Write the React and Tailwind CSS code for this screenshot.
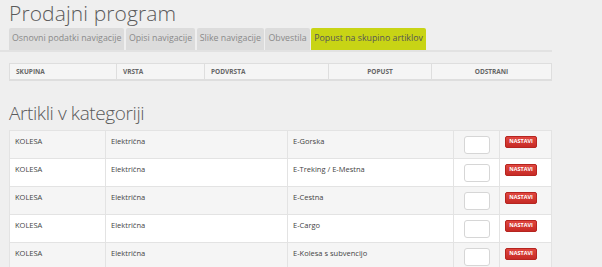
import React from 'react'

const TABS = [
  { label: 'Osnovni podatki navigacije' },
  { label: 'Opisi navigacije' },
  { label: 'Slike navigacije' },
  { label: 'Obvestila' },
  { label: 'Popust na skupino artiklov', active: true },
]

const ROWS = [
  { skupina: 'KOLESA', vrsta: 'Električna', podvrsta: 'E-Gorska' },
  { skupina: 'KOLESA', vrsta: 'Električna', podvrsta: 'E-Treking / E-Mestna' },
  { skupina: 'KOLESA', vrsta: 'Električna', podvrsta: 'E-Cestna' },
  { skupina: 'KOLESA', vrsta: 'Električna', podvrsta: 'E-Cargo' },
  { skupina: 'KOLESA', vrsta: 'Električna', podvrsta: 'E-Kolesa s subvencijo' },
]

export default function App() {
  return (
    <div
      className="w-[602px] h-[267px] overflow-hidden bg-[#efefef] text-[#555]"
      style={{ fontFamily: '"Open Sans", "Liberation Sans", sans-serif' }}
    >
      <h1 className="pl-[9px] pt-[1px] h-[28px] text-[21px] leading-[24px] font-light text-[#5a5a5a] tracking-[0.1px]">
        Prodajni program
      </h1>

      {/* tabs */}
      <div className="w-[552px] border-b-2 border-[#e2e2e2]">
        <div className="flex gap-[1.5px] pl-[9px]">
          {TABS.map(t => (
            <div
              key={t.label}
              className={`h-[22px] px-[3px] flex items-center rounded-t-[2px] text-[8.8px] whitespace-nowrap ${
                t.active ? 'bg-[#c8d415] text-[#555]' : 'bg-[#dcdcdc] text-[#8a8a8a]'
              }`}
            >
              {t.label}
            </div>
          ))}
        </div>
      </div>

      {/* discount table header */}
      <div className="pl-[9px] pt-[11px]">
        <div className="w-[543px] h-[18px] flex border border-[#dedede] border-b-2 bg-[#f5f5f5] text-[6.5px] font-bold text-[#666]">
          <div className="w-[107px] pl-[6px] flex items-center border-r border-[#dedede]">SKUPINA</div>
          <div className="w-[88px] pl-[6px] flex items-center border-r border-[#dedede]">VRSTA</div>
          <div className="w-[124px] pl-[6px] flex items-center border-r border-[#dedede]">PODVRSTA</div>
          <div className="w-[103px] flex items-center justify-center border-r border-[#dedede]">POPUST</div>
          <div className="flex-1 flex items-center justify-center">ODSTRANI</div>
        </div>
      </div>

      <h2 className="pl-[9px] pt-[18px] h-[49px] text-[19px] leading-[28px] font-light text-[#5a5a5a] tracking-[-0.4px]">
        Artikli v kategoriji
      </h2>

      {/* articles */}
      <div className="pl-[9px]">
        <table className="w-[543px] border-collapse table-fixed text-[7.5px] text-[#444]">
          <colgroup>
            <col className="w-[96px]" />
            <col className="w-[182px]" />
            <col className="w-[166px]" />
            <col className="w-[46px]" />
            <col />
          </colgroup>
          <tbody>
            {ROWS.map((r, i) => (
              <tr key={r.podvrsta} className={i % 2 === 0 ? 'bg-[#f5f5f5]' : 'bg-white'}>
                <td className="h-[28px] border border-[#e3e3e3] pl-[5px] pb-[5px] align-middle text-[#444]">{r.skupina}</td>
                <td className="border border-[#e3e3e3] pl-[5px] pb-[5px] align-middle text-[#444]">{r.vrsta}</td>
                <td className="border border-[#e3e3e3] pl-[5px] pb-[5px] align-middle text-[#444]">{r.podvrsta}</td>
                <td className="border border-[#e3e3e3] align-middle">
                  <div className="ml-[10px] w-[26px] h-[18px] bg-white border border-[#d6d6d6] rounded-[3px]" />
                </td>
                <td className="border border-[#e3e3e3] align-middle">
                  <button className="ml-[5px] mb-[5px] w-[32px] h-[12px] rounded-[2px] bg-gradient-to-b from-[#e0463f] to-[#c72a25] border border-[#b52520] text-white text-[5.5px] font-bold leading-none flex items-center justify-center">
                    NASTAVI
                  </button>
                </td>
              </tr>
            ))}
          </tbody>
        </table>
      </div>
    </div>
  )
}
